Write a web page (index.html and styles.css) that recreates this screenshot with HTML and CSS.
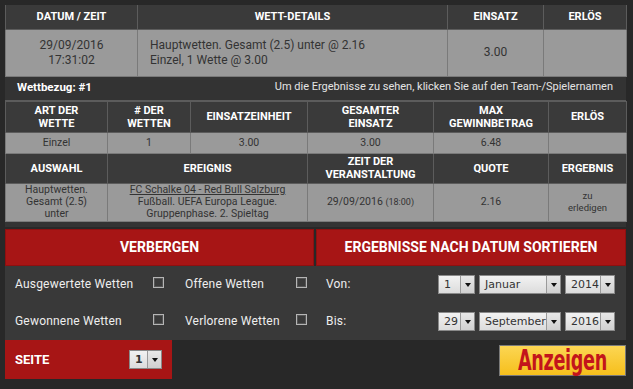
FILE: index.html
```html
<!DOCTYPE html>
<html lang="de">
<head>
<meta charset="utf-8">
<title>Wetten</title>
<link rel="stylesheet" href="styles.css">
</head>
<body>
<div class="page">
  <div class="panel">
    <table class="tbl top">
      <colgroup><col style="width:132px"><col style="width:310px"><col style="width:96px"><col style="width:83px"></colgroup>
      <tr class="hd h24"><th>DATUM / ZEIT</th><th>WETT-DETAILS</th><th>EINSATZ</th><th>ERLÖS</th></tr>
      <tr class="dt h47">
        <td>29/09/2016<br>17:31:02</td>
        <td class="left">Hauptwetten. Gesamt (2.5) unter @ 2.16<br>Einzel, 1 Wette @ 3.00</td>
        <td>3.00</td>
        <td></td>
      </tr>
    </table>
    <div class="ref">
      <span class="ref-id">Wettbezug: #1</span>
      <span class="ref-hint">Um die Ergebnisse zu sehen, klicken Sie auf den Team-/Spielernamen</span>
    </div>
    <table class="tbl second">
      <colgroup><col style="width:102px"><col style="width:83px"><col style="width:117px"><col style="width:126px"><col style="width:115px"><col style="width:78px"></colgroup>
      <tr class="hd h31"><th>ART DER<br>WETTE</th><th># DER<br>WETTEN</th><th>EINSATZEINHEIT</th><th>GESAMTER<br>EINSATZ</th><th>MAX<br>GEWINNBETRAG</th><th>ERLÖS</th></tr>
      <tr class="dt sm h21"><td>Einzel</td><td>1</td><td>3.00</td><td>3.00</td><td>6.48</td><td></td></tr>
      <tr class="hd h30"><th>AUSWAHL</th><th colspan="2">EREIGNIS</th><th>ZEIT DER<br>VERANSTALTUNG</th><th>QUOTE</th><th>ERGEBNIS</th></tr>
      <tr class="dt sm h38">
        <td>Hauptwetten.<br>Gesamt (2.5)<br>unter</td>
        <td colspan="2"><a class="event">FC Schalke 04 - Red Bull Salzburg</a><br>Fußball. UEFA Europa League.<br>Gruppenphase. 2. Spieltag</td>
        <td>29/09/2016 <span class="time">(18:00)</span></td>
        <td>2.16</td>
        <td class="tiny">zu<br>erledigen</td>
      </tr>
    </table>
  </div>

  <div class="actions">
    <button class="red-btn">VERBERGEN</button>
    <button class="red-btn">ERGEBNISSE NACH DATUM SORTIEREN</button>
  </div>

  <div class="filters">
    <span class="flabel">Ausgewertete Wetten</span><span class="cb"></span>
    <span class="flabel">Offene Wetten</span><span class="cb"></span>
    <span class="flabel">Von:</span>
    <div class="sels">
      <span class="sel w37"><span class="val">1</span><span class="arr"></span></span>
      <span class="sel w82"><span class="val">Januar</span><span class="arr"></span></span>
      <span class="sel w50"><span class="val">2014</span><span class="arr"></span></span>
    </div>
    <span class="flabel">Gewonnene Wetten</span><span class="cb"></span>
    <span class="flabel">Verlorene Wetten</span><span class="cb"></span>
    <span class="flabel">Bis:</span>
    <div class="sels">
      <span class="sel w37"><span class="val">29</span><span class="arr"></span></span>
      <span class="sel w82"><span class="val">September</span><span class="arr"></span></span>
      <span class="sel w50"><span class="val">2016</span><span class="arr"></span></span>
    </div>
  </div>

  <div class="bottom">
    <div class="seite">
      <span>SEITE</span>
      <span class="sel w33"><span class="val">1</span><span class="arr"></span></span>
    </div>
    <button class="show"><span class="show-txt">Anzeigen</span></button>
  </div>
</div>
</body>
</html>
```
FILE: styles.css
```css
* { box-sizing: border-box; }
html, body { margin: 0; padding: 0; }
body {
  background: #282828;
  font-family: Roboto, "Liberation Sans", sans-serif;
  width: 633px;
  height: 389px;
  overflow: hidden;
}
.page { padding: 5px 7px 0 5px; }
.panel {
  background: #333;
  padding-bottom: 5px;
}
.tbl {
  border-collapse: collapse;
  table-layout: fixed;
  width: 621px;
}
.tbl th, .tbl td {
  border: 1px solid #5c5c5c;
  padding: 0 4px;
  text-align: center;
  vertical-align: middle;
}
.hd th {
  background: #3a3a3a;
  color: #fff;
  font-size: 11px;
  font-weight: 700;
  line-height: 13px;
}
.dt td {
  background: #9a9a9a;
  color: #333;
  font-size: 12px;
  line-height: 15px;
  border-color: #7a7a7a;
}
.dt td.left { text-align: left; padding-left: 12px; }
.dt.sm td { font-size: 10.5px; line-height: 12px; }
.dt.sm td.tiny { font-size: 9.5px; }
.time { font-size: 9px; }
.event { text-decoration: underline; color: #333; }
.h24 { height: 24px; }
.h47 { height: 47px; }
.h31 { height: 31px; }
.h21 { height: 21px; }
.h30 { height: 30px; }
.h38 { height: 38px; }
.top th, .top td { border-top: none; }
.ref {
  display: flex;
  justify-content: space-between;
  align-items: center;
  height: 24px;
  padding: 0 13px 3px 12px;
  border-bottom: 1px solid #5c5c5c;
  font-size: 11px;
}
.ref-id { color: #fff; font-weight: 700; font-size: 11.5px; }
.ref-hint { color: #e4e4e4; }

.actions {
  display: flex;
  gap: 2px;
  margin-top: 2px;
  width: 621px;
}
.red-btn {
  flex: 1;
  height: 37px;
  background: #a71515;
  border: 1px solid #8e1010;
  color: #fff;
  font-family: Roboto, "Liberation Sans", sans-serif;
  font-weight: 700;
  font-size: 14px;
  padding: 0;
}
.actions .red-btn:last-child { flex: 0 0 310px; }

.filters {
  display: grid;
  grid-template-columns: 138px 32px 111px 30px 1fr auto;
  grid-auto-rows: 37px;
  align-items: center;
  background: #393939;
  width: 621px;
  padding: 0 11px 0 10px;
  color: #eee;
  font-size: 12px;
}
.flabel { letter-spacing: 0.2px; }
.cb {
  width: 11px;
  height: 11px;
  border: 1px solid #b5b5b5;
  background: #3a3a3a;
  box-shadow: inset 0 0 0 1px #555;
  margin-top: -4px;
}
.sels { display: flex; gap: 4px; }
.sel {
  display: inline-flex;
  height: 19px;
  border: 1px solid #8a8a8a;
  background: linear-gradient(#f2f2f2, #dcdcdc);
  font-family: "DejaVu Sans", sans-serif;
  font-size: 11px;
  color: #333;
  align-items: stretch;
}
.sel .val { flex: 1; padding-left: 5px; line-height: 17px; }
.sel .arr {
  width: 14px;
  border-left: 1px solid #9a9a9a;
  background: linear-gradient(#e8e8e8, #d0d0d0);
  position: relative;
}
.sel .arr::after {
  content: "";
  position: absolute;
  left: 4px;
  top: 7px;
  border-left: 3px solid transparent;
  border-right: 3px solid transparent;
  border-top: 4px solid #111;
}
.w37 { width: 37px; }
.w82 { width: 82px; }
.w50 { width: 50px; }
.w33 { width: 33px; }

.bottom {
  display: flex;
  justify-content: space-between;
  align-items: flex-start;
  width: 621px;
}
.seite {
  width: 167px;
  height: 39px;
  background: #a71515;
  display: flex;
  align-items: center;
  justify-content: space-between;
  padding: 0 10px 0 10px;
  color: #fff;
  font-weight: 700;
  font-size: 13px;
}
.seite .sel { font-size: 11px; }
.show {
  margin-top: 5px;
  width: 127px;
  height: 31px;
  background: linear-gradient(#fcd653, #f6bf1c);
  border: 1px solid #7a7a7a;
  color: #c3151b;
  font-family: "DejaVu Sans Condensed", "DejaVu Sans", sans-serif;
  font-weight: 700;
  font-size: 28px;
  line-height: 28px;
  padding: 0;
  display: flex;
  justify-content: center;
  align-items: center;
}
.show-txt {
  display: inline-block;
  transform: scaleX(0.7);
  letter-spacing: -0.5px;
  margin: 2px -30px 0;
}
```
